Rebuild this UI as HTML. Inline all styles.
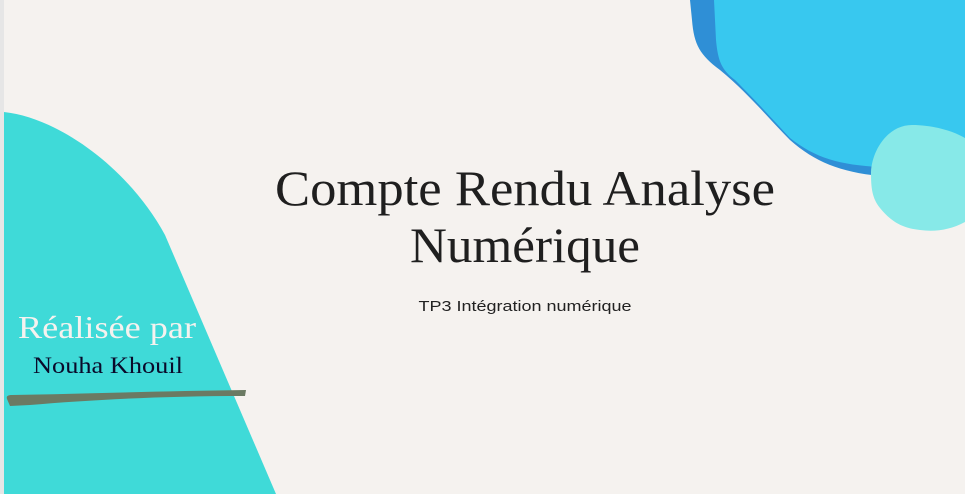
<!DOCTYPE html>
<html><head><meta charset="utf-8"><style>
html,body{margin:0;padding:0;}
body{width:965px;height:494px;overflow:hidden;background:#f5f2ef;}
</style></head><body>
<svg width="965" height="494" viewBox="0 0 965 494" xmlns="http://www.w3.org/2000/svg" style="display:block">
<rect width="965" height="494" fill="#f5f2ef"/>
<rect x="0" y="0" width="4" height="494" fill="#e6e6e6"/>
<!-- left teal shape -->
<path d="M4 112 C60 118 130 170 165 235 L276 494 L4 494 Z" fill="#3fdad8"/>
<!-- top right blue -->
<path d="M690 0 L692 20 C694 45 700 55 720 70 C750 95 770 120 790 140 C815 162 840 172 880 176 L965 176 L965 0 Z" fill="#2f8fd6"/>
<path d="M714 0 L716 40 C718 62 722 70 735 80 C760 105 775 122 790 138 C815 158 840 165 880 167 L965 170 L965 0 Z" fill="#38c8ef"/>
<!-- cyan blob -->
<path d="M912 125 C935 125 955 132 965 138 L965 222 C950 230 935 232 920 230 C900 228 890 220 880 208 C872 198 871 188 871 172 C872 150 888 125 912 125 Z" fill="#87e9e8"/>
<!-- stroke -->
<path d="M7 399 C6 396 8 395 12 395 C80 394 160 391 246 390 L245 396 C160 396 90 400 30 405 L10 406 Z" fill="#6b7a63"/>
<!-- text -->
<text x="525" y="205" text-anchor="middle" font-family="Liberation Serif, serif" font-size="50" fill="#1f1f1f" textLength="500" lengthAdjust="spacingAndGlyphs">Compte Rendu Analyse</text>
<text x="525" y="262" text-anchor="middle" font-family="Liberation Serif, serif" font-size="50" fill="#1f1f1f" textLength="230" lengthAdjust="spacingAndGlyphs">Numérique</text>
<text x="525" y="311" text-anchor="middle" font-family="Liberation Sans, sans-serif" font-size="15" fill="#222" textLength="213" lengthAdjust="spacingAndGlyphs">TP3 Intégration numérique</text>
<text x="107" y="338" text-anchor="middle" font-family="Liberation Serif, serif" font-size="32" fill="#f5f2ef" textLength="178" lengthAdjust="spacingAndGlyphs">Réalisée par</text>
<text x="108" y="373" text-anchor="middle" font-family="Liberation Serif, serif" font-size="23" fill="#0a0a2a" textLength="150" lengthAdjust="spacingAndGlyphs">Nouha Khouil</text>
</svg>
</body></html>
